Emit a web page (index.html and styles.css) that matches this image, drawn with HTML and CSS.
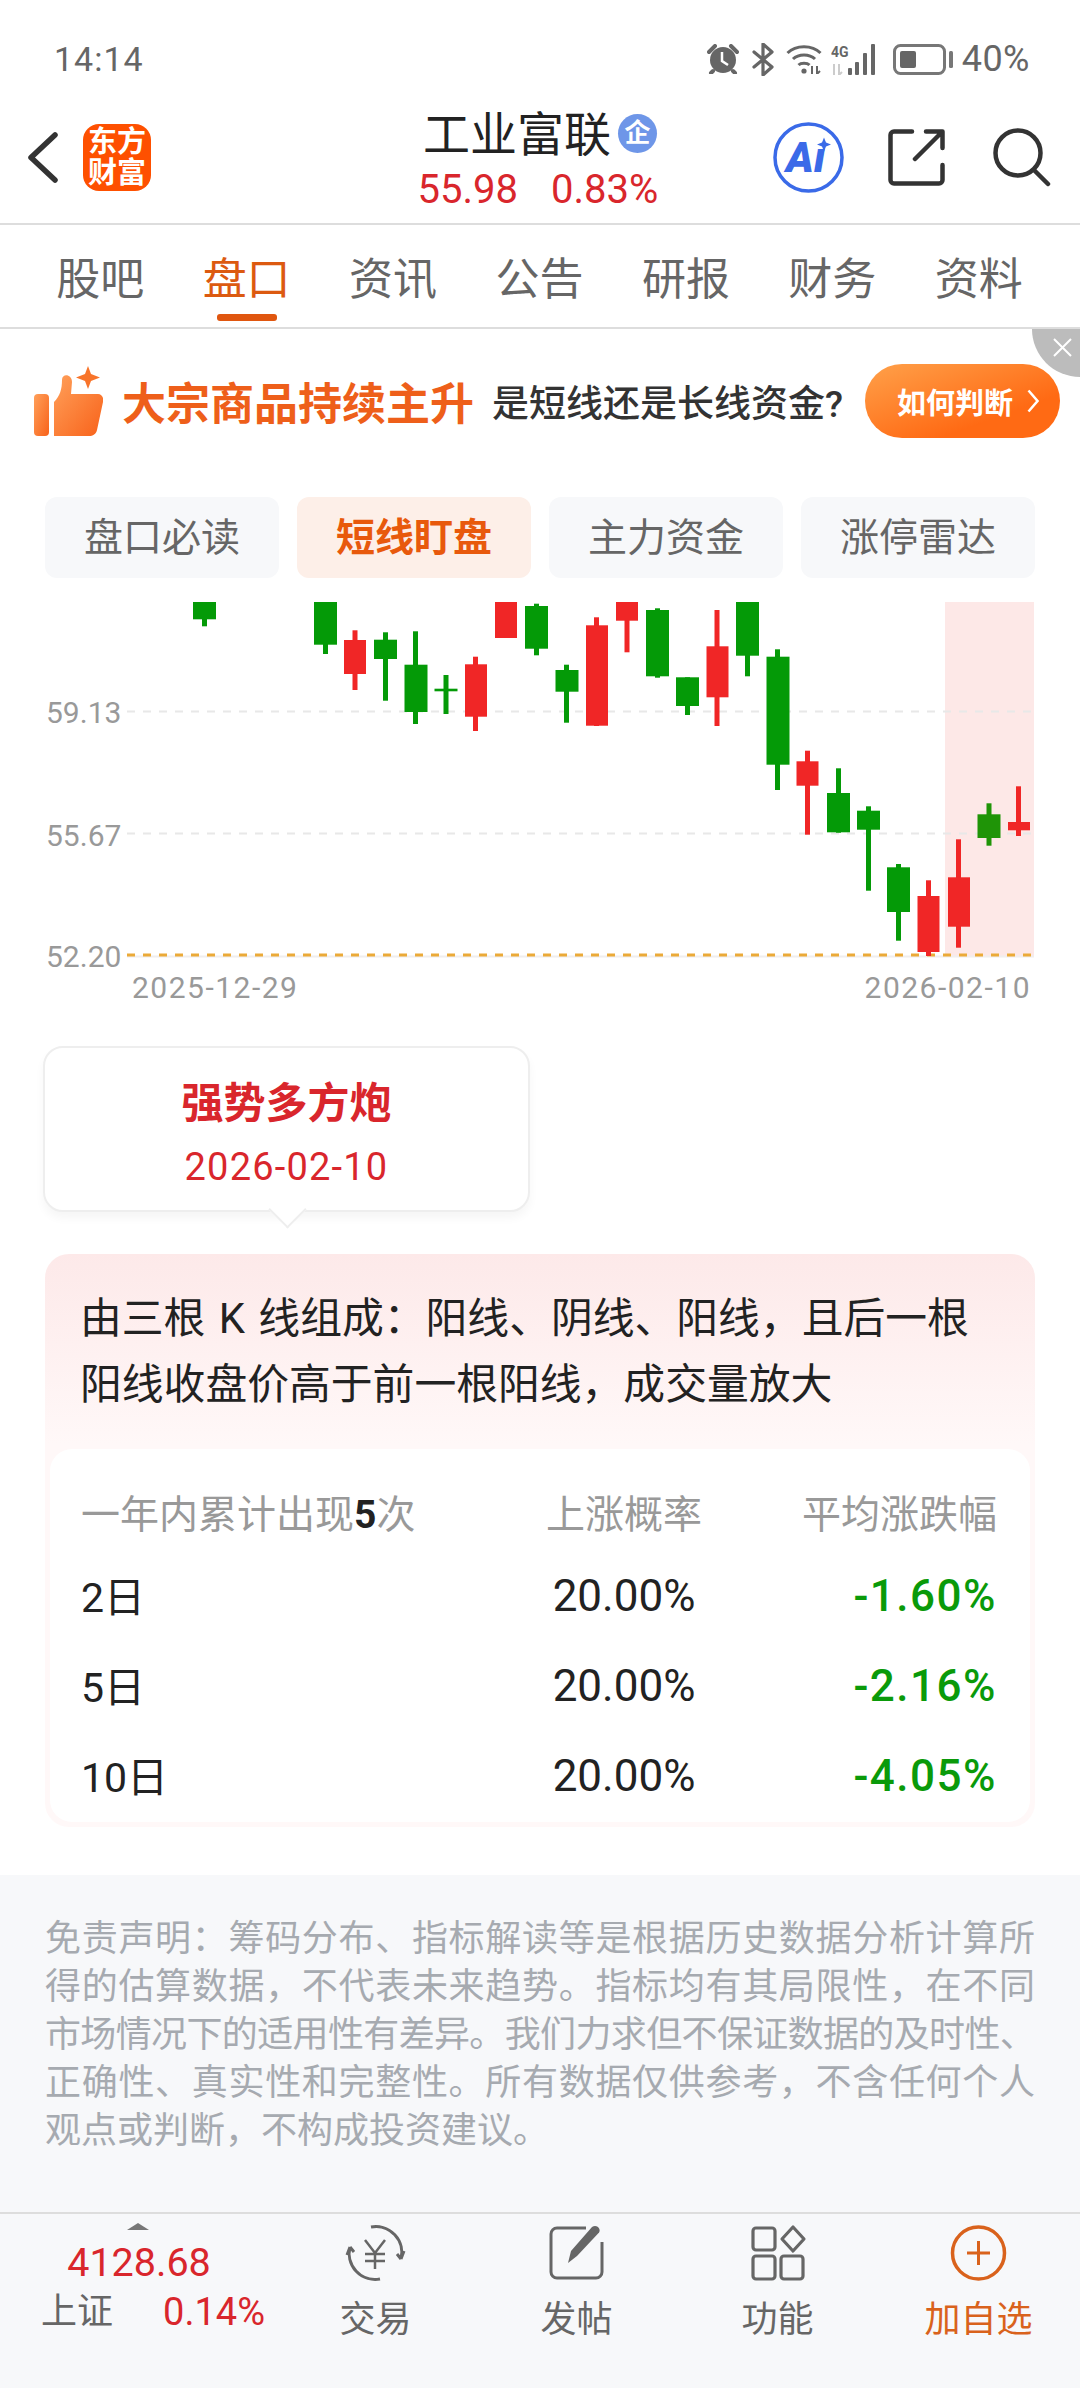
FILE: index.html
```html
<!DOCTYPE html>
<html lang="zh">
<head>
<meta charset="utf-8">
<title>工业富联</title>
<link rel="stylesheet" href="styles.css">
</head>
<body>
<div class="page">
  <div class="status">
    <span class="time">14:14</span>
    <div class="status-icons">
      <svg class="ic-alarm" viewBox="0 0 32 30"><circle cx="16" cy="16" r="13" fill="#666"/><path d="M2 8 8 2M30 8 24 2M6 27 4 29M26 27 28 29" stroke="#666" stroke-width="4" stroke-linecap="round" fill="none"/><path d="M15 8V17L21 21" stroke="#fff" stroke-width="2.5" fill="none"/></svg>
      <svg class="ic-bt" viewBox="0 0 22 33"><path d="M2 9 20 24 11 32V1L20 9 2 24" stroke="#666" stroke-width="3.2" fill="none" stroke-linejoin="round" stroke-linecap="round"/></svg>
      <svg class="ic-wifi" viewBox="0 0 36 30"><path d="M1.500 9C10 .5 26 .5 34.500 9M7 15C12.500 9.500 23.500 9.500 29 15M12.500 21C15 18.500 21 18.500 23.500 21" stroke="#666" stroke-width="3" fill="none"/><circle cx="18" cy="27" r="2.600" fill="#666"/><path d="M26 22V30M31 22V30M31 30 34 27" stroke="#666" stroke-width="2" fill="none"/></svg>
      <svg class="ic-signal" viewBox="0 0 50 31"><text x="0" y="13" class="net">4G</text><path d="M3 20V31M8 20V31M8 31 11 28" stroke="#ccc" stroke-width="2" fill="none"/><rect x="17" y="24" width="4" height="7" rx="1" fill="#666"/><rect x="24" y="18" width="4" height="13" rx="1" fill="#666"/><rect x="32" y="9" width="4" height="22" rx="1" fill="#666"/><rect x="40" y="0" width="4" height="31" rx="1" fill="#666"/></svg>
      <svg class="ic-batt" viewBox="0 0 60 31"><rect x="1.500" y="1.500" width="50" height="28" rx="6" stroke="#777" stroke-width="3" fill="none"/><rect x="7" y="7" width="16" height="17" rx="2" fill="#666"/><rect x="56" y="7" width="4" height="17" rx="1.500" fill="#777"/></svg>
      <span class="batt-text">40%</span>
    </div>
  </div>

  <header class="head">
    <div class="head-left">
      <svg class="ic-back" viewBox="0 0 30 51"><path d="M27 3 3 25.500 27 48" stroke="#333" stroke-width="5.500" fill="none" stroke-linecap="round" stroke-linejoin="round"/></svg>
      <div class="logo"><span>东方</span><span>财富</span></div>
    </div>
    <div class="head-mid">
      <div class="title-row"><span class="title">工业富联</span><span class="badge">企</span></div>
      <div class="price-row"><span>55.98</span><span>0.83%</span></div>
    </div>
    <div class="head-right">
      <svg class="ic-ai" viewBox="0 0 71 71"><circle cx="35.500" cy="35.500" r="33.500" stroke="#3a6ae8" stroke-width="3.500" fill="#fff"/><text x="13" y="50" class="ai-text">Aı</text><path d="M51 15.500 53 20.500 58 22.500 53 24.500 51 29.500 49 24.500 44 22.500 49 20.500Z" fill="#3a6ae8"/></svg>
      <svg class="ic-share" viewBox="0 0 57 57"><path d="M24 2.500H6A3.500 3.500 0 0 0 2.500 6V51A3.500 3.500 0 0 0 6 54.500H51A3.500 3.500 0 0 0 54.500 51V36M27 30 54 3M38 2.500H54.500V19" stroke="#333" stroke-width="4.500" fill="none" stroke-linecap="round" stroke-linejoin="round"/></svg>
      <svg class="ic-search" viewBox="0 0 59 59"><circle cx="25" cy="25" r="22.500" stroke="#333" stroke-width="4.500" fill="none"/><path d="M41 42 55 56" stroke="#333" stroke-width="4.500" stroke-linecap="round"/></svg>
    </div>
  </header>

  <nav class="tabs">
    <span class="tab">股吧</span>
    <span class="tab tab-on">盘口</span>
    <span class="tab">资讯</span>
    <span class="tab">公告</span>
    <span class="tab">研报</span>
    <span class="tab">财务</span>
    <span class="tab">资料</span>
  </nav>

  <section class="banner">
    <svg class="ic-thumb" viewBox="0 0 69 70">
      <defs><linearGradient id="th" x1="0" y1="0" x2="1" y2="1"><stop offset="0" stop-color="#ffa05a"/><stop offset="1" stop-color="#f8621a"/></linearGradient></defs>
      <rect x="0" y="28" width="15" height="42" rx="4" fill="url(#th)"/>
      <path d="M20 70V36C26 30 28 23 28 14 28 7 38 8 38 16L37 28H64C68 28 70 32 69 36L63 64C62 68 59 70 55 70Z" fill="url(#th)"/>
      <path d="M54 0 57 8 66 11.500 57 15 54 23 51 15 42 11.500 51 8Z" fill="#f8742a"/>
    </svg>
    <span class="b-title">大宗商品持续主升</span>
    <span class="b-sub">是短线还是长线资金?</span>
    <div class="b-btn"><span>如何判断</span><svg class="ic-more" viewBox="0 0 12 24"><path d="M1.500 1.500 10.500 12 1.500 22.500" stroke="#fff" stroke-width="2.500" fill="none"/></svg></div>
    <div class="b-close"><svg class="ic-x" viewBox="0 0 19 19"><path d="M1 1 18 18M18 1 1 18" stroke="#fff" stroke-width="2"/></svg></div>
  </section>

  <div class="segs">
    <span class="seg">盘口必读</span>
    <span class="seg seg-on">短线盯盘</span>
    <span class="seg">主力资金</span>
    <span class="seg">涨停雷达</span>
  </div>

  <svg class="chart" viewBox="0 590 1080 420">
    <rect x="945" y="602" width="89" height="354" fill="#fde8e7"/>
    <path class="grid" d="M127 711.500H1034M127 833.500H1034"/>
    <path class="base" d="M127 956.500H1034"/>
    <path class="low" d="M127 955H1034"/>
    <g class="up-g">
      <rect x="202" y="602" width="5" height="24.300"/><rect x="193" y="602" width="23" height="17.300"/>
      <rect x="323" y="602" width="5" height="52"/><rect x="314" y="602" width="23" height="42.700"/>
      <rect x="383" y="632.300" width="5" height="68.400"/><rect x="374" y="639.700" width="23" height="19.300"/>
      <rect x="413" y="631.300" width="5" height="92.700"/><rect x="404.500" y="664.700" width="23" height="47.300"/>
      <rect x="443.500" y="675" width="5" height="39"/><rect x="434.500" y="688.700" width="23" height="2.600"/>
      <rect x="534" y="603.700" width="5" height="51.600"/><rect x="525" y="606" width="23" height="42.700"/>
      <rect x="564" y="664.700" width="5" height="58"/><rect x="555.500" y="670" width="23" height="21.700"/>
      <rect x="655" y="608.300" width="5" height="69.400"/><rect x="646" y="610" width="23" height="66.300"/>
      <rect x="685" y="677.300" width="5" height="37.700"/><rect x="676" y="677.300" width="23" height="28.700"/>
      <rect x="745" y="602" width="5" height="74.300"/><rect x="736" y="602" width="23" height="53.700"/>
      <rect x="775" y="649.300" width="5" height="140.700"/><rect x="766.500" y="656.700" width="23" height="108"/>
      <rect x="836" y="768.300" width="5" height="64.400"/><rect x="827" y="793" width="23" height="39.300"/>
      <rect x="866" y="806.300" width="5" height="84.400"/><rect x="857" y="810.700" width="23" height="19"/>
      <rect x="896" y="864" width="5" height="76.700"/><rect x="887" y="867.300" width="23" height="44.700"/>
    </g>
    <g class="up-h">
      <rect x="986.500" y="803.300" width="5" height="42.400"/><rect x="977.500" y="814.300" width="23" height="23.700"/>
    </g>
    <g class="dn">
      <rect x="352.500" y="630.300" width="5" height="59.700"/><rect x="344" y="640" width="22" height="34"/>
      <rect x="473" y="656.700" width="5" height="74.300"/><rect x="465" y="664.300" width="22" height="52.400"/>
      <rect x="495" y="602" width="22" height="36"/>
      <rect x="594" y="617.300" width="5" height="108.700"/><rect x="586" y="625.300" width="22" height="100.400"/>
      <rect x="624.500" y="602" width="5" height="50.300"/><rect x="616" y="602" width="22" height="18.700"/>
      <rect x="714.500" y="610" width="5" height="116"/><rect x="706.500" y="646.300" width="22" height="51"/>
      <rect x="805" y="750.700" width="5" height="84"/><rect x="796.500" y="761.300" width="22" height="24.400"/>
      <rect x="926" y="880.300" width="5" height="75.700"/><rect x="917.500" y="896" width="22" height="56"/>
      <rect x="956" y="839.300" width="5" height="108.400"/><rect x="948" y="877.300" width="22" height="49.400"/>
      <rect x="1016" y="786.300" width="5" height="49.700"/><rect x="1008" y="822" width="22" height="8.300"/>
    </g>
    <text x="46" y="723" class="axis">59.13</text>
    <text x="46" y="846" class="axis">55.67</text>
    <text x="46" y="967" class="axis">52.20</text>
    <text x="132" y="998" class="axis date">2025-12-29</text>
    <text x="1031" y="998" class="axis date end">2026-02-10</text>
  </svg>

  <div class="bubble">
    <div class="bubble-title">强势多方炮</div>
    <div class="bubble-date">2026-02-10</div>
  </div>

  <section class="card">
    <p class="desc">由三根 K 线组成：阳线、阴线、阳线，且后一根阳线收盘价高于前一根阳线，成交量放大</p>
    <div class="stats">
      <div class="row row-head"><span>一年内累计出现<b>5</b>次</span><span class="mid">上涨概率</span><span class="end">平均涨跌幅</span></div>
      <div class="row"><span class="day">2日</span><span class="mid">20.00%</span><span class="end fall">-1.60%</span></div>
      <div class="row"><span class="day">5日</span><span class="mid">20.00%</span><span class="end fall">-2.16%</span></div>
      <div class="row"><span class="day">10日</span><span class="mid">20.00%</span><span class="end fall">-4.05%</span></div>
    </div>
  </section>

  <section class="note">
    <span class="note-line">免责声明：筹码分布、指标解读等是根据历史数据分析计算所</span>
    <span class="note-line">得的估算数据，不代表未来趋势。指标均有其局限性，在不同</span>
    <span class="note-line note-tight">市场情况下的适用性有差异。我们力求但不保证数据的及时性、</span>
    <span class="note-line">正确性、真实性和完整性。所有数据仅供参考，不含任何个人</span>
    <span class="note-line note-last">观点或判断，不构成投资建议。</span>
  </section>

  <footer class="foot">
    <div class="index">
      <span class="tri"></span>
      <span class="idx-val">4128.68</span>
      <div class="idx-row"><span class="idx-name">上证</span><span class="idx-pct">0.14%</span></div>
    </div>
    <div class="act">
      <svg class="act-ic" viewBox="0 0 69 58"><path d="M30 3A26 26 0 0 1 60 35M60 35 63 27M60 35 56 30M39 55A26 26 0 0 1 9 23M9 23 6 31M9 23 13 28" stroke="#666" stroke-width="3" fill="none"/><path d="M24 16 34 29 44 16M24 30H44M24 37H44M34 29V45" stroke="#666" stroke-width="2.500" fill="none"/></svg>
      <span>交易</span>
    </div>
    <div class="act">
      <svg class="act-ic" viewBox="0 0 69 58"><path d="M44 4H15A6 6 0 0 0 9 10V48A6 6 0 0 0 15 54H54A6 6 0 0 0 60 48V18" stroke="#666" stroke-width="3" fill="none"/><path d="M26 39 29 27 50 3C52 1.500 54 1.500 56 3 58 5 58 7 57 8.500L35 32Z" fill="#666"/></svg>
      <span>发帖</span>
    </div>
    <div class="act">
      <svg class="act-ic" viewBox="0 0 69 58"><g stroke="#666" stroke-width="3.200" fill="none"><rect x="10" y="4" width="22" height="22" rx="3"/><rect x="10" y="32" width="22" height="23" rx="3"/><rect x="38" y="32" width="22" height="23" rx="3"/><path d="M50 3 61 15 50 27 39 15Z" stroke-linejoin="round"/></g></svg>
      <span>功能</span>
    </div>
    <div class="act act-on">
      <svg class="act-ic" viewBox="0 0 69 58"><circle cx="34.500" cy="29" r="26" stroke="#d9621c" stroke-width="3.500" fill="none"/><path d="M23 29H46M34.500 17V41" stroke="#d9621c" stroke-width="3" fill="none"/></svg>
      <span>加自选</span>
    </div>
  </footer>
</div>
</body>
</html>
```

FILE: styles.css
```css
* { box-sizing: border-box; }
html, body { margin: 0; padding: 0; background: #fff; }
body { font-family: Roboto, "Noto Sans CJK SC", sans-serif; color: #222; }
.page { width: 1080px; height: 2388px; overflow: hidden; display: flex; flex-direction: column; }

/* status bar */
.status { height: 100px; padding: 18px 50px 0 54px; display: flex; align-items: center; justify-content: space-between; color: #666; flex: none; }
.time { font-size: 34px; letter-spacing: 1px; }
.status-icons { display: flex; align-items: center; }
.ic-alarm { width: 32px; height: 30px; margin-right: 13px; }
.ic-bt { width: 22px; height: 33px; margin-right: 12px; }
.ic-wifi { width: 36px; height: 30px; margin-right: 9px; }
.ic-signal { width: 50px; height: 31px; margin-right: 12px; }
.ic-batt { width: 60px; height: 31px; margin-right: 9px; }
.net { font-size: 14px; font-weight: 700; fill: #666; }
.batt-text { font-size: 36px; letter-spacing: .5px; }

/* header */
.head { height: 125px; padding: 0 28px; display: grid; grid-template-columns: 1fr auto 1fr; border-bottom: 2px solid #ddd; flex: none; }
.head-left { display: flex; align-items: flex-start; padding-top: 24px; }
.ic-back { width: 30px; height: 51px; margin: 8px 25px 0 0; }
.logo { width: 68px; height: 67px; border-radius: 16px; background: #fe5000; color: #fff; font-size: 29px; font-weight: 700; line-height: 31px; display: flex; flex-direction: column; align-items: center; justify-content: center; }
.head-mid { display: flex; flex-direction: column; align-items: center; padding-top: 7px; }
.title-row { display: flex; align-items: center; height: 56px; }
.title { font-size: 47px; line-height: 56px; color: #222; }
.badge { width: 39px; height: 39px; border-radius: 50%; background: #6e96e8; color: #fff; font-size: 26px; font-weight: 700; line-height: 39px; text-align: center; margin-left: 7px; margin-top: -3px; }
.price-row { display: flex; gap: 33px; margin-top: 4px; margin-left: -4px; font-size: 40px; line-height: 46px; color: #d9262c; }
.head-right { display: flex; align-items: flex-start; justify-content: flex-end; padding-top: 22px; }
.ic-ai { width: 71px; height: 71px; margin-right: 44px; }
.ai-text { font-size: 42px; font-weight: 900; font-style: italic; fill: #3a6ae8; font-family: Roboto, sans-serif; }
.ic-share { width: 57px; height: 57px; margin: 7px 48px 0 0; }
.ic-search { width: 59px; height: 59px; margin-top: 6px; }

/* tabs */
.tabs { height: 104px; padding: 0 28px 0 27px; display: grid; grid-template-columns: repeat(7, 1fr); border-bottom: 2px solid #ddd; flex: none; }
.tab { position: relative; display: flex; align-items: center; justify-content: center; font-size: 44px; color: #666; }
.tab-on { color: #dc5a10; }
.tab-on::after { content: ""; position: absolute; left: 50%; bottom: 6px; width: 60px; height: 7px; margin-left: -30px; border-radius: 3px; background: #e0560f; }

/* banner */
.banner { position: relative; height: 144px; padding-left: 34px; display: flex; align-items: center; flex: none; }
.ic-thumb { width: 69px; height: 70px; margin-right: 19px; }
.b-title { font-size: 44px; font-weight: 700; color: #ee5f1a; white-space: nowrap; margin-right: 18px; }
.b-sub { font-size: 37px; font-weight: 500; color: #333; white-space: nowrap; }
.b-btn { width: 195px; height: 74px; margin-left: 22px; border-radius: 37px; background: linear-gradient(160deg, #ffa14a, #ff6a14 70%); color: #fff; font-size: 29px; font-weight: 700; display: flex; align-items: center; padding-left: 32px; flex: none; }
.ic-more { width: 12px; height: 24px; margin-left: 14px; }
.b-close { position: absolute; right: 0; top: 0; width: 48px; height: 48px; border-bottom-left-radius: 48px; background: #bcbcbc; }
.ic-x { position: absolute; left: 21px; top: 9px; width: 19px; height: 19px; }

/* segments */
.segs { margin-top: 24px; padding: 0 45px; display: flex; gap: 18px; flex: none; }
.seg { flex: 1; height: 81px; border-radius: 12px; background: #f7f8fa; color: #666; font-size: 39px; line-height: 82px; text-align: center; }
.seg-on { background: #fdefe8; color: #e8590c; font-weight: 700; }

/* chart */
.chart { display: block; width: 1080px; height: 420px; margin-top: 12px; flex: none; }
.grid { stroke: #e8e8e8; stroke-width: 2; stroke-dasharray: 8 8; fill: none; }
.base { stroke: #f0eeee; stroke-width: 2; fill: none; }
.low { stroke: #ebaa38; stroke-width: 3; stroke-dasharray: 8 8; fill: none; }
.up-g { fill: #049a07; }
.up-h { fill: #1f9407; }
.dn { fill: #f02626; }
.axis { font-size: 30px; fill: #999; font-family: Roboto, sans-serif; }
.date { letter-spacing: 1.500px; }
.end { text-anchor: end; }

/* bubble */
.bubble { position: relative; width: 487px; height: 166px; margin: 36px 0 0 43px; border: 2px solid #eee; border-radius: 20px; background: #fff; box-shadow: 0 6px 10px rgba(0,0,0,.04); text-align: center; color: #d9262c; flex: none; }
.bubble::after { content: ""; position: absolute; left: 229px; bottom: -13px; width: 25px; height: 25px; background: #fff; border-right: 2px solid #eee; border-bottom: 2px solid #eee; transform: rotate(45deg); }
.bubble-title { margin-top: 29px; font-size: 42px; font-weight: 700; line-height: 54px; }
.bubble-date { margin-top: 11px; font-size: 38px; line-height: 50px; letter-spacing: 1.200px; }

/* card */
.card { width: 990px; height: 573px; margin: 42px 0 0 45px; padding: 32px 5px 5px; border-radius: 24px; background: linear-gradient(#fde9e9, #fff8f8 190px); flex: none; }
.desc { margin: 0 -2px; padding: 0 32px; font-size: 41.800px; word-spacing: 3px; line-height: 66px; color: #222; }
.stats { margin-top: 31px; height: 373px; padding: 32px 33px 0 31px; border-radius: 22px; background: #fff; }
.row { display: grid; grid-template-columns: 393px 300px 1fr; height: 90px; align-items: center; font-size: 44px; color: #222; }
.day { font-size: 41px; margin-top: -4px; }
.row .mid { text-align: center; }
.row .end { text-align: right; }
.row-head { height: 60px; margin-bottom: 10px; font-size: 39px; color: #999; }
.row-head b { color: #222; }
.fall { color: #0a9a0a; font-weight: 500; letter-spacing: 1.500px; }

/* note */
.note { margin-top: 48px; height: 337px; padding: 40px 45px 0; background: #f7f8fa; color: #a6aab0; font-size: 36px; line-height: 48px; flex: none; }
.note-line { display: block; white-space: nowrap; text-align: justify; text-align-last: justify; }
.note-tight { letter-spacing: -.8px; }
.note-last { text-align-last: left; }

/* footer */
.foot { height: 176px; background: #f7f8fa; border-top: 2px solid #ddd; display: grid; grid-template-columns: 275px repeat(4, 201px); flex: none; }
.index { display: flex; flex-direction: column; align-items: center; padding-top: 9px; }
.tri { width: 0; height: 0; border-left: 11px solid transparent; border-right: 11px solid transparent; border-bottom: 7px solid #777; margin-bottom: 11px; }
.idx-val { font-size: 39.500px; line-height: 44px; color: #d9262c; padding-left: 3px; }
.idx-row { width: 100%; margin-top: 5px; padding: 0 10px 0 41px; display: flex; justify-content: space-between; align-items: center; line-height: 44px; }
.idx-name { font-size: 36px; color: #666; }
.idx-pct { font-size: 38px; color: #d9262c; }
.act { display: flex; flex-direction: column; align-items: center; padding-top: 10px; font-size: 36px; line-height: 44px; color: #666; }
.act-ic { width: 69px; height: 58px; margin-bottom: 16px; }
.act-on { color: #d9621c; }
```
